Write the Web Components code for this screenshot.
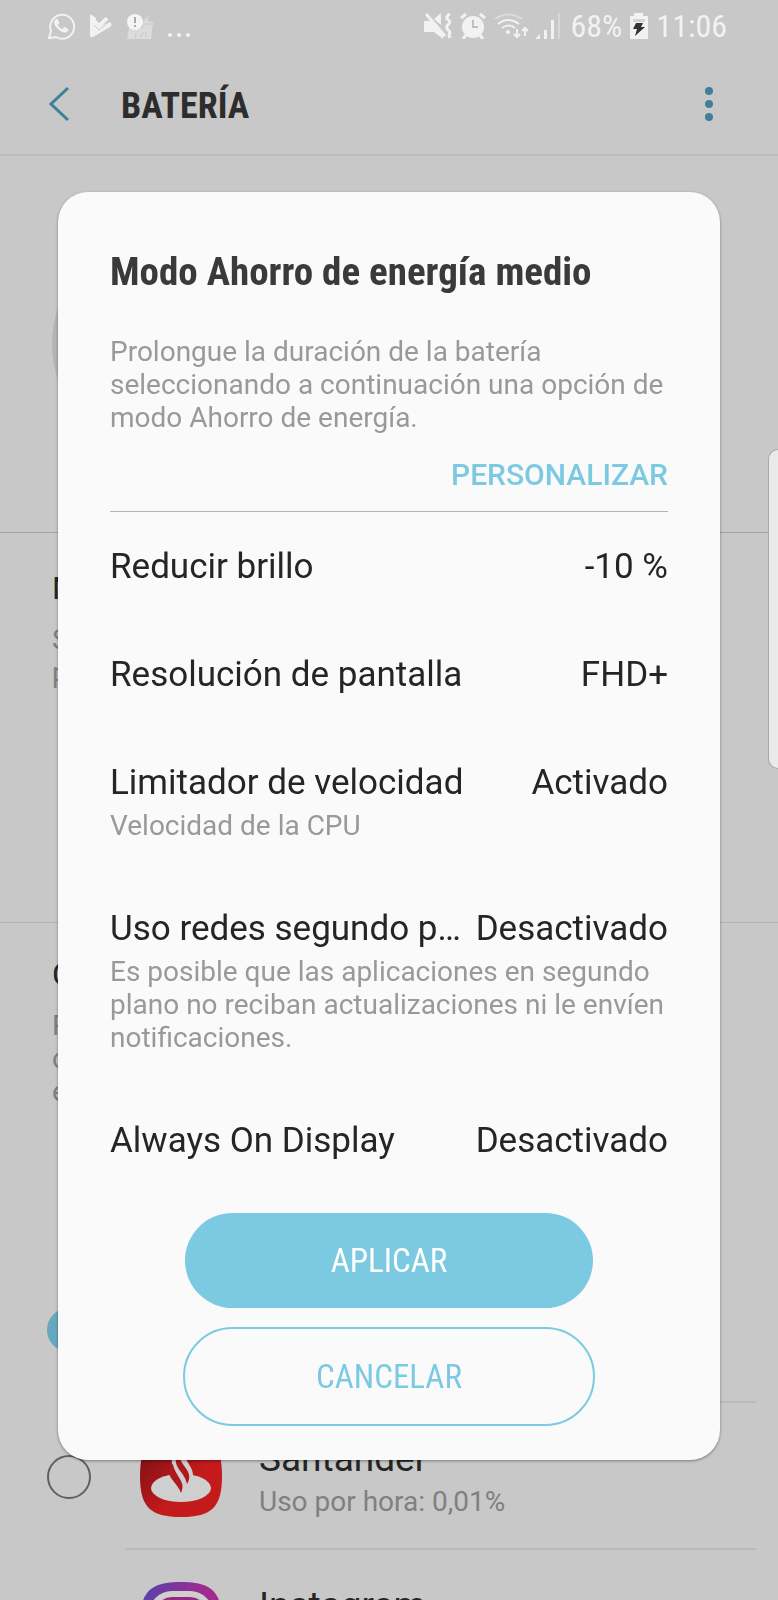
<!DOCTYPE html>
<html lang="es">
<head>
<meta charset="utf-8">
<meta name="viewport" content="width=device-width, initial-scale=1">
<title>Batería</title>
<style>
    :root {
        --accent: #7ccae2;
        --ink: #252525;
        --muted: #999;
        --condensed: "Roboto Condensed", Roboto, sans-serif;
    }
    body {
        margin: 0;
        height: 100vh;
        overflow: hidden;
        background: #c8c8c8;
        color: var(--ink);
        font-family: Roboto, sans-serif;
    }
</style>
</head>
<body>
<status-bar></status-bar>
<app-bar>BATERÍA</app-bar>
<battery-ring></battery-ring>
<info-section data-title="M" class="summary">S<br>p</info-section>
<info-section data-title="C">P<br>c<br>e</info-section>
<app-list>
    <app-item data-checked></app-item>
    <app-item data-name="Santander" data-usage="Uso por hora: 0,01%">
        <svg slot="icon" viewBox="0 0 82 82" width="82" height="82">
            <defs>
                <linearGradient id="red" x1="0" y1="0" x2="1" y2="1">
                    <stop offset="0.1" stop-color="#7c1013"/>
                    <stop offset="0.6" stop-color="#c41a1c"/>
                </linearGradient>
            </defs>
            <path d="M41 0C72 0 82 10 82 41S72 82 41 82 0 72 0 41 10 0 41 0z" fill="url(#red)"/>
            <ellipse cx="41" cy="53" rx="30" ry="14" fill="#cfcfcf"/>
            <path d="M34 18c-4 9-2 13 2 20l8 12 6-2 3-8c0-8-7-13-10-22z" fill="#cfcfcf"/>
            <path d="M29 37c0 7 9 12 12 21 2-5 2-8 0-12-3-6-7-10-8-17-3 2-4 5-4 8z" fill="#b0191b"/>
            <path d="M36 23c-2 10 9 15 11 26 3-5 3-9 0-14-3-5-7-9-8-15z" fill="#b0191b"/>
        </svg>
    </app-item>
    <app-item data-name="Instagram" data-usage="">
        <svg slot="icon" viewBox="0 0 82 82" width="82" height="82">
            <defs>
                <linearGradient id="insta" x1="0" y1="0" x2="1" y2="0">
                    <stop offset="0.1" stop-color="#5f3fa8"/>
                    <stop offset="0.8" stop-color="#a02a90"/>
                </linearGradient>
            </defs>
            <path d="M41 0C72 0 82 10 82 41S72 82 41 82 0 72 0 41 10 0 41 0z" fill="url(#insta)"/>
            <rect x="12" y="12" width="58" height="58" rx="20" fill="#96297f" stroke="#cfcfcf" stroke-width="6"/>
            <circle cx="41" cy="41" r="12" fill="none" stroke="#cfcfcf" stroke-width="6"/>
        </svg>
    </app-item>
</app-list>
<edge-handle></edge-handle>
<power-dialog data-title="Modo Ahorro de energía medio">
    <span slot="description">Prolongue la duración de la batería seleccionando a continuación una opción de modo Ahorro de energía.</span>
    <setting-row data-name="Reducir brillo" data-value="-10 %"></setting-row>
    <setting-row data-name="Resolución de pantalla" data-value="FHD+"></setting-row>
    <setting-row data-name="Limitador de velocidad" data-value="Activado">Velocidad de la CPU</setting-row>
    <setting-row data-name="Uso redes segundo p…" data-value="Desactivado">Es posible que las aplicaciones en segundo plano no reciban actualizaciones ni le envíen notificaciones.</setting-row>
    <setting-row data-name="Always On Display" data-value="Desactivado"></setting-row>
    <pill-button slot="actions" data-kind="filled">APLICAR</pill-button>
    <pill-button slot="actions">CANCELAR</pill-button>
</power-dialog>

<script>
class BaseElement extends HTMLElement {
    constructor() {
        super();
        this.attachShadow({ mode: "open" });
    }

    connectedCallback() {
        this.shadowRoot.innerHTML = this.style_ + this.template;
    }
}

class StatusBar extends BaseElement {
    get template() {
        return /*html*/`
            <div class="group left">
                <svg width="28" height="28" viewBox="0 0 28 28">
                    <path d="M2 26l2-7A12 12 0 1 1 9 25z" fill="none" stroke="#f2f2f2" stroke-width="2"/>
                    <path d="M9 7c-4 3-1 7 2 10s7 5 10 2c1-2 0-2-3-4-2 0-2 2-3 2-2-1-4-3-4-5 1 0 2-1 1-2-1-2-1-4-3-3z" fill="#f2f2f2"/>
                </svg>
                <svg width="22" height="24" viewBox="0 0 22 24">
                    <path d="M0 2q0-2 2-1l4 3v4l4 4L20 8q3 3 0 5L3 23q-3 1-3-1z" fill="#f2f2f2"/>
                    <path d="M4 7l5 5 8-8" fill="none" stroke="#f2f2f2" stroke-width="4"/>
                    <path d="M4 11l5 5L21 6M6 3l4 5 6-6" fill="none" stroke="#c8c8c8"/>
                </svg>
                <svg width="26" height="26" viewBox="0 0 26 26">
                    <path d="M0 26l2-11h14V9l7-8-3 7 6 1-2 17z" fill="#dcdcdc"/>
                    <path d="M8 25l1-5M14 24l2-5M19 19v5M16 11h9" stroke="#c8c8c8"/>
                    <circle cx="8" cy="9" r="8" fill="#f5f5f5"/>
                    <path d="M8 4v6M8 12v2" stroke="#aaa" stroke-width="2"/>
                </svg>
                <svg width="22" height="26" viewBox="0 0 22 26" fill="#f2f2f2">
                    <circle cx="2" cy="22" r="2"/><circle cx="11" cy="22" r="2"/><circle cx="20" cy="22" r="2"/>
                </svg>
            </div>
            <div class="group right">
                <svg width="28" height="26" viewBox="0 0 28 26">
                    <path d="M0 8h6l3 2 10 9v7l-9-7H0zM10 6l7-6v12z" fill="#f2f2f2"/>
                    <path d="M2 1l19 22" stroke="#f2f2f2" stroke-width="3"/>
                    <path d="M26 1q-4 2-3 5 4 2 2 5-4 2-1 6 3 2 1 5l1 3" fill="none" stroke="#f2f2f2" stroke-width="3"/>
                </svg>
                <svg width="26" height="26" viewBox="0 0 26 26">
                    <circle cx="13" cy="14" r="11" fill="#f2f2f2"/>
                    <path d="M1 5l5-4M25 5l-5-4M6 22l-3 4M20 22l3 4" stroke="#f2f2f2" stroke-width="3"/>
                    <path d="M13 7v7h5" fill="none" stroke="#c0c0c0" stroke-width="2"/>
                </svg>
                <svg class="wifi" width="33" height="26" viewBox="0 0 33 26" fill="none" stroke="#f2f2f2" stroke-width="2">
                    <path d="M1 6q13-9 27 0" stroke="#dcdcdc"/>
                    <path d="M4 11q10-8 21 0M8 15q7-5 13 0"/>
                    <circle cx="14" cy="19" r="2" fill="#f2f2f2" stroke="none"/>
                    <path d="M23 16v8M20 21l3 3 3-3M31 23v-8M28 18l3-3 3 3"/>
                </svg>
                <svg class="signal" width="26" height="26" viewBox="0 0 26 26" fill="#f2f2f2">
                    <path d="M0 26h5v-5zM9 17h3v9H9zM16 7h3v19h-3z"/>
                    <path d="M23 0h2v26h-2z" fill="#d8d8d8"/>
                </svg>
                <span>68%</span>
                <svg width="18" height="26" viewBox="0 0 18 26">
                    <path d="M0 3h4V0h9v3h5v23H0z" fill="#f2f2f2"/>
                    <path d="M3 6h12v3H3z" fill="#d4d4d4"/>
                    <path d="M6 10h7l-2 4h4L5 23l2-7H3z" fill="#333"/>
                </svg>
                <span>11:06</span>
            </div>
        `;
    }

    get style_() {
        return /*html*/`
            <style>
                :host {
                    display: flex;
                    justify-content: space-between;
                    align-items: center;
                    height: 52px;
                    padding: 0 51px 0 47px;
                    color: #f2f2f2;
                    font: 400 32px/52px var(--condensed);
                }
                .group { display: flex; align-items: center; }
                .left { gap: 15px; }
                .right { gap: 8px; }
                .wifi { overflow: visible; }
                .signal { margin-right: 2px; }
                svg { display: block; flex: none; }
            </style>
        `;
    }
}

class AppBar extends BaseElement {
    get template() {
        return /*html*/`
            <button aria-label="Atrás">
                <svg width="22" height="36" viewBox="0 0 22 36"><path d="M20 2L3 18l17 16" fill="none" stroke="#3f8099" stroke-width="3"/></svg>
            </button>
            <h1><slot></slot></h1>
            <button aria-label="Más opciones">
                <svg width="8" height="36" viewBox="0 0 8 36" fill="#3f8099">
                    <circle cx="4" cy="5" r="4"/><circle cx="4" cy="18" r="4"/><circle cx="4" cy="31" r="4"/>
                </svg>
            </button>
        `;
    }

    get style_() {
        return /*html*/`
            <style>
                :host {
                    display: flex;
                    align-items: center;
                    height: 100px;
                    padding: 2px 65px 0 48px;
                    border-bottom: 2px solid #bcbcbc;
                }
                h1 {
                    flex: 1;
                    margin: 0 0 0 51px;
                    padding-top: 4px;
                    color: #2d2d2d;
                    font: 700 36px/48px var(--condensed);
                }
                button {
                    padding: 0;
                    border: 0;
                    background: none;
                }
                svg { display: block; }
            </style>
        `;
    }
}

class BatteryRing extends BaseElement {
    get template() {
        return `<div></div>`;
    }

    get style_() {
        return /*html*/`
            <style>
                :host {
                    display: block;
                    padding: 80px 52px;
                    border-bottom: 1px solid #a4a4a4;
                }
                div {
                    box-sizing: border-box;
                    width: 216px;
                    height: 216px;
                    border: 8px solid #b5b5b5;
                    border-radius: 50%;
                }
            </style>
        `;
    }
}

class InfoSection extends BaseElement {
    get template() {
        return /*html*/`
            <h2>${this.dataset.title}</h2>
            <p><slot></slot></p>
        `;
    }

    get style_() {
        return /*html*/`
            <style>
                :host {
                    display: block;
                    padding: 31px 52px 0;
                }
                :host(.summary) {
                    padding: 35px 52px 233px;
                    border-bottom: 1px solid #b4b4b4;
                }
                h2 {
                    margin: 0 0 15px;
                    font: 400 32px/40px Roboto, sans-serif;
                }
                p {
                    margin: 0;
                    color: #808080;
                    font-size: 28px;
                    line-height: 33px;
                }
            </style>
        `;
    }
}

class AppList extends BaseElement {
    get template() {
        return `<slot></slot>`;
    }

    get style_() {
        return /*html*/`
            <style>
                :host {
                    display: block;
                    margin-top: 148px;
                }
            </style>
        `;
    }
}

class AppItem extends BaseElement {
    get template() {
        const { name = "", usage = "" } = this.dataset;
        return /*html*/`
            <input type="radio" id="pick" ${"checked" in this.dataset ? "checked" : ""}>
            <label for="pick">
                <slot name="icon"></slot>
                <span class="text">
                    <span>${name}</span>
                    <span class="usage">${usage}</span>
                </span>
            </label>
        `;
    }

    get style_() {
        return /*html*/`
            <style>
                :host {
                    display: flex;
                    align-items: center;
                    gap: 34px;
                    height: 147px;
                    padding: 0 22px 0 47px;
                }
                input {
                    appearance: none;
                    flex: none;
                    box-sizing: border-box;
                    width: 44px;
                    height: 44px;
                    margin: 0;
                    border: 2px solid #606060;
                    border-radius: 50%;
                }
                input:checked {
                    border: 12px solid #66a9bf;
                    background: #d0d0d0;
                }
                label {
                    flex: 1;
                    display: flex;
                    align-items: center;
                    gap: 37px;
                    height: 145px;
                    padding-left: 15px;
                    border-bottom: 2px solid #bababa;
                }
                .text {
                    display: flex;
                    flex-direction: column;
                    padding-top: 9px;
                    font-size: 37px;
                    line-height: 44px;
                }
                .usage {
                    min-height: 42px;
                    color: #808080;
                    font-size: 28px;
                    line-height: 42px;
                }
            </style>
        `;
    }
}

class EdgeHandle extends BaseElement {
    get template() {
        return ``;
    }

    get style_() {
        return /*html*/`
            <style>
                :host {
                    position: fixed;
                    top: 449px;
                    right: 0;
                    box-sizing: border-box;
                    width: 10px;
                    height: 320px;
                    border: 1px solid #a8a8a8;
                    border-right: 0;
                    border-radius: 12px 0 0 12px;
                    background: #eaeaea;
                }
            </style>
        `;
    }
}

class PowerDialog extends BaseElement {
    get template() {
        return /*html*/`
            <section role="dialog" aria-labelledby="title">
                <h2 id="title">${this.dataset.title}</h2>
                <p><slot name="description"></slot></p>
                <button>PERSONALIZAR</button>
                <div class="rows"><slot></slot></div>
                <div class="actions"><slot name="actions"></slot></div>
            </section>
        `;
    }

    get style_() {
        return /*html*/`
            <style>
                :host {
                    position: fixed;
                    inset: 0;
                    display: grid;
                    align-items: start;
                    padding: 192px 58px 0;
                }
                section {
                    display: flex;
                    flex-direction: column;
                    padding: 56px 52px 34px;
                    border-radius: 30px;
                    background: #fafafa;
                    box-shadow: 0 1px 3px rgba(0, 0, 0, 0.4);
                }
                h2 {
                    margin: 0 0 39px;
                    color: #3a3a3a;
                    font: 700 39px/48px var(--condensed);
                }
                p {
                    margin: 0 0 21px;
                    color: var(--muted);
                    font-size: 28px;
                    line-height: 33px;
                }
                button {
                    align-self: flex-end;
                    margin: 0 0 16px;
                    padding: 0;
                    border: 0;
                    background: none;
                    color: var(--accent);
                    font: 500 30px/40px Roboto, sans-serif;
                }
                .rows {
                    border-top: 1px solid #b4b4b4;
                }
                .actions {
                    display: flex;
                    flex-direction: column;
                    align-items: center;
                    gap: 17px;
                    margin-top: 17px;
                }
            </style>
        `;
    }
}

class SettingRow extends BaseElement {
    get template() {
        return /*html*/`
            <div class="head">
                <span class="name">${this.dataset.name}</span>
                <span>${this.dataset.value}</span>
            </div>
            ${this.textContent ? "<p><slot></slot></p>" : ""}
        `;
    }

    get style_() {
        return /*html*/`
            <style>
                :host {
                    display: block;
                    padding: 34px 0 32px;
                }
                .head {
                    display: flex;
                    gap: 12px;
                    font-size: 35px;
                    line-height: 42px;
                }
                .name {
                    flex: 1;
                    min-width: 0;
                    overflow: hidden;
                    white-space: nowrap;
                    text-overflow: ellipsis;
                }
                p {
                    margin: 5px 0 0;
                    color: var(--muted);
                    font-size: 28px;
                    line-height: 33px;
                }
            </style>
        `;
    }
}

class PillButton extends BaseElement {
    get template() {
        return `<button><slot></slot></button>`;
    }

    get style_() {
        return /*html*/`
            <style>
                :host {
                    display: block;
                    width: 74%;
                }
                button {
                    display: block;
                    width: 100%;
                    height: 99px;
                    padding: 0;
                    border: 2px solid var(--accent);
                    border-radius: 50px;
                    background: none;
                    color: var(--accent);
                    font: 400 33px/40px var(--condensed);
                }
                :host([data-kind="filled"]) button {
                    border-color: transparent;
                    background: var(--accent) padding-box;
                    color: #fff;
                }
            </style>
        `;
    }
}

customElements.define("status-bar", StatusBar);
customElements.define("app-bar", AppBar);
customElements.define("battery-ring", BatteryRing);
customElements.define("info-section", InfoSection);
customElements.define("app-list", AppList);
customElements.define("app-item", AppItem);
customElements.define("edge-handle", EdgeHandle);
customElements.define("setting-row", SettingRow);
customElements.define("pill-button", PillButton);
customElements.define("power-dialog", PowerDialog);
</script>
</body>
</html>
